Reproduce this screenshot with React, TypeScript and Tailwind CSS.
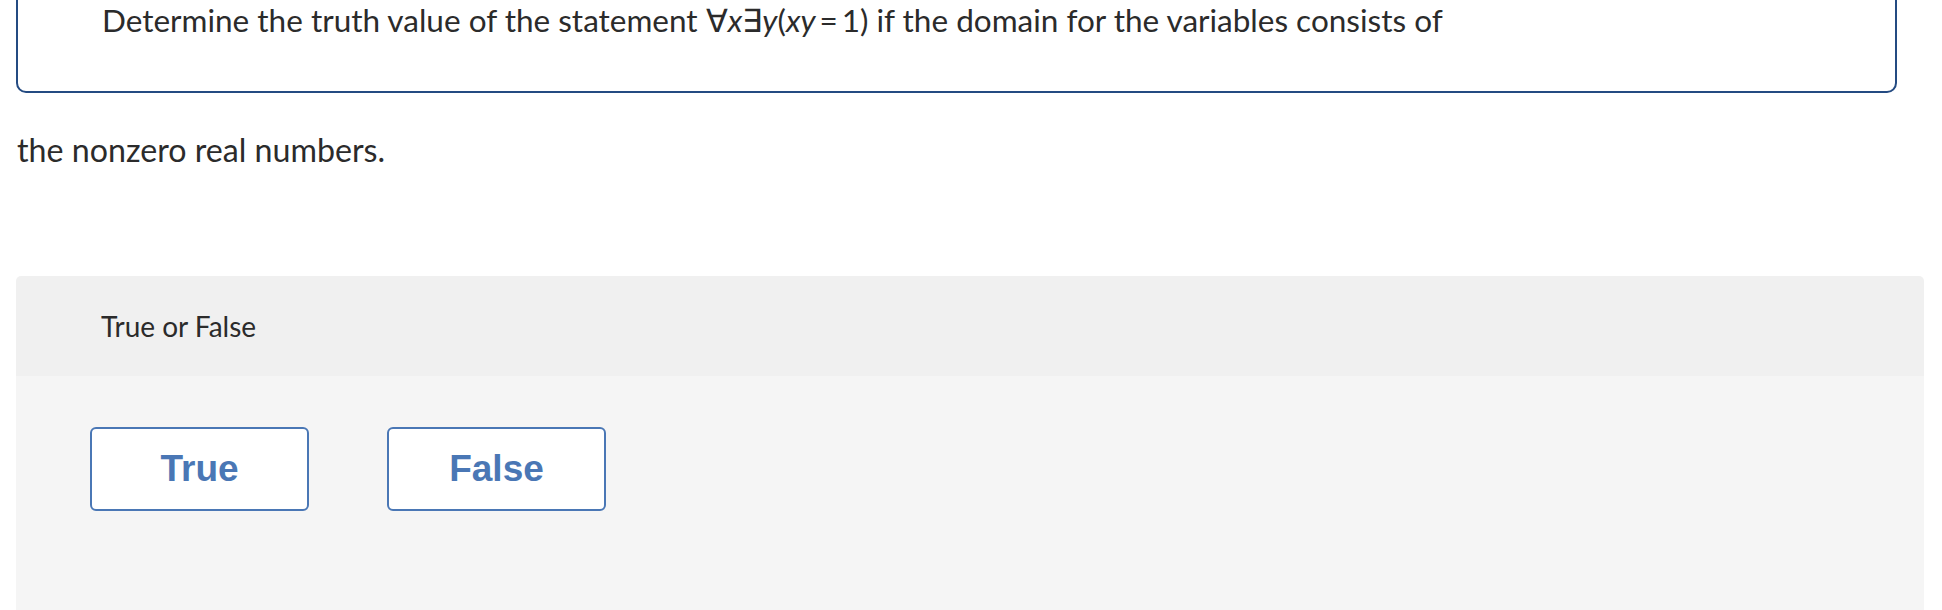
export default function App() {
  return (
    <div className="h-[610px] w-[1942px] overflow-hidden bg-white text-[#2b2b2b] [font-family:Lato,'Liberation_Sans',sans-serif]">
      {/* question prompt box, top edge is scrolled off */}
      <div className="-mt-[12px] ml-[16px] h-[105px] w-[1881px] rounded-[10px] border-2 border-[#244b82] pl-[84px] pt-[10px]">
        <p className="text-[31.5px] leading-[40px]">
          Determine the truth value of the statement ∀<i>x</i>∃<i>y</i>(<i>xy</i>&thinsp;=&thinsp;1) if the domain for
          the variables consists of
        </p>
      </div>

      <p className="ml-[17px] mt-[37px] text-[32.2px] leading-[40px]">the nonzero real numbers.</p>

      <div className="ml-[16px] mt-[106px] w-[1908px] overflow-hidden rounded-t-[5px]">
        <div className="flex h-[100px] items-center bg-[#f0f0f0] pl-[85px]">
          <span className="text-[28px]">True or False</span>
        </div>
        <div className="flex h-[240px] gap-[78px] bg-[#f5f5f5] pl-[74px] pt-[51px]">
          {["True", "False"].map((label) => (
            <button
              key={label}
              type="button"
              className="flex h-[84px] w-[219px] items-center justify-center rounded-[6px] border-2 border-[#4a77b5] bg-white text-[37px] font-bold text-[#4a77b5] [font-family:'Liberation_Sans',Arial,sans-serif]"
            >
              {label}
            </button>
          ))}
        </div>
      </div>
    </div>
  );
}
